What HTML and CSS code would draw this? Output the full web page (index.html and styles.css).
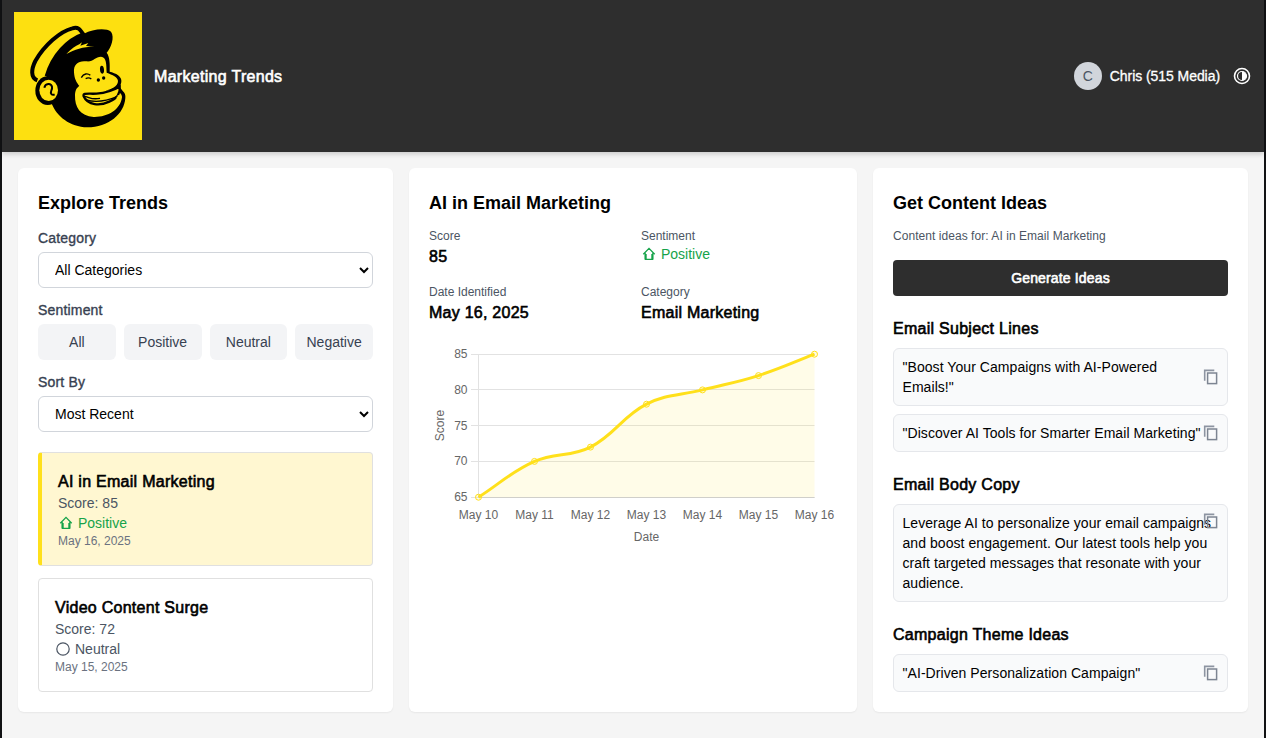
FILE: index.html
```html
<!DOCTYPE html>
<html lang="en">
<head>
<meta charset="utf-8">
<title>Marketing Trends</title>
<link rel="stylesheet" href="styles.css">
</head>
<body>
<svg class="defs" aria-hidden="true">
  <symbol id="copy" viewBox="0 0 16 16"><path d="M1.7 11.8V1.4h9.6" fill="none" stroke="#8d94a1" stroke-width="1.6"/><rect x="4.6" y="4" width="9" height="10.6" fill="none" stroke="#7d8592" stroke-width="1.5"/></symbol>
  <symbol id="home" viewBox="0 0 16 16"><path d="M2.3 8.3L8 2.4l5.7 5.9M4.3 7.2v6.1h7.4V7.2" fill="none" stroke="currentColor" stroke-width="1.3"/><path d="M3.7 8h2v5h-2zM10.3 8h2v5h-2z" fill="currentColor"/></symbol>
</svg>
<div class="app">
  <header class="header">
    <svg class="logo" viewBox="42 36 384 384">
      <rect x="42" y="36" width="384" height="384" fill="#fde010"/>
      <path d="M138 238C142 205 165 160 190 138C212 118 236 104 252 101C278 87 318 83 333 95C345 112 333 143 320 158C329 170 330 190 329 215C347 219 367 229 364 246L360 262C366 274 378 277 376 294C373 342 325 382 262 382C210 380 170 350 154 308Z"/>
      <path d="M112 241C91 233 94 207 106 183C132 137 180 94 217 85C235 80 239 87 250 103C204 119 158 165 140 229" fill="#fde010" stroke="#000" stroke-width="12"/>
      <path d="M199 162C214 147 226 138 238 133L246 127L241 137L265 129L258 138L283 140C248 140 224 148 199 162Z" fill="#fde010"/>
      <path d="M222 217C220 190 238 181 260 184C280 186 286 170 303 170C320 171 319 193 320 218C337 224 354 232 354 243C354 260 332 268 317 272C339 271 349 267 354 269C353 276 367 280 366 292C361 330 322 352 281 351C240 348 224 322 225 286C226 270 229 265 238 258C230 248 223 237 222 217Z" fill="#fde010"/>
      <ellipse cx="143" cy="272" rx="37" ry="43"/>
      <ellipse cx="146" cy="271" rx="28" ry="32" fill="#fde010"/>
      <path d="M133 263C136 249 153 248 156 260C158 270 149 275 154 282C157 286 161 284 164 284" fill="none" stroke="#000" stroke-width="6"/>
      <path d="M251 289C248 278 262 282 290 281C319 278 343 269 359 260C361 275 355 295 328 305C301 318 263 317 251 289Z" fill="#fde010" stroke="#000" stroke-width="7"/>
      <path d="M255 289C271 293 275 300 300 295M258 300C290 309 323 302 351 290" fill="none" stroke="#000" stroke-width="4"/>
      <path d="M355 286Q359 295 350 294" fill="none" stroke="#fde010" stroke-width="7"/>
      <path d="M244 233C251 220 263 219 271 226M257 236Q266 231 274 237" fill="none" stroke="#000" stroke-width="4"/>
      <ellipse cx="306" cy="209" rx="6" ry="12" transform="rotate(-5 306 209)"/><circle cx="295" cy="240" r="5"/><circle cx="311" cy="234" r="5"/>
    </svg>
    <h1 class="brand">Marketing Trends</h1>
    <div class="user"><span class="avatar">C</span><span class="name">Chris (515 Media)</span>
      <svg class="contrast" viewBox="0 0 18 18"><circle cx="9" cy="9" r="7.5" fill="none" stroke="#fff" stroke-width="1.6"/><circle cx="9" cy="9" r="4.5" fill="none" stroke="#fff" stroke-width="1.2"/><path d="M9 4.5a4.5 4.5 0 0 1 0 9z" fill="#fff"/></svg>
    </div>
  </header>
  <main class="columns">
    <section class="panel">
      <h2 class="title">Explore Trends</h2>
      <label class="label">Category</label>
      <select class="select"><option>All Categories</option></select>
      <label class="label">Sentiment</label>
      <div class="filters"><button>All</button><button>Positive</button><button>Neutral</button><button>Negative</button></div>
      <label class="label">Sort By</label>
      <select class="select"><option>Most Recent</option></select>
      <div class="trends">
        <article class="trend active"><h3>AI in Email Marketing</h3><p>Score: 85</p><p class="mood positive"><svg class="icon"><use href="#home"/></svg>Positive</p><time>May 16, 2025</time></article>
        <article class="trend"><h3>Video Content Surge</h3><p>Score: 72</p><p class="mood"><svg class="icon" viewBox="0 0 16 16"><circle cx="8" cy="8" r="6.2" fill="none" stroke="currentColor" stroke-width="1.2"/></svg>Neutral</p><time>May 15, 2025</time></article>
      </div>
    </section>
    <section class="panel">
      <h2 class="title">AI in Email Marketing</h2>
      <dl class="facts">
        <div><dt>Score</dt><dd>85</dd></div>
        <div><dt>Sentiment</dt><dd class="mood positive"><svg class="icon"><use href="#home"/></svg>Positive</dd></div>
        <div><dt>Date Identified</dt><dd>May 16, 2025</dd></div>
        <div><dt>Category</dt><dd>Email Marketing</dd></div>
      </dl>
      <svg class="chart" viewBox="429 340 408 210">
        <path class="grid" d="M471 354.5H814.5M471 389.5H814.5M471 425.5H814.5M471 461.5H814.5M471 497.5H814.5M478.5 354V497"/>
        <path class="grid base" d="M478.5 497.5H814.5"/>
        <path class="area" d="M478.5 497.2C500.9 482.9 510.5 472.1 534.5 461.4C555.3 452.1 570.3 457.4 590.5 447.1C615.1 434.5 621.9 416.8 646.5 404.2C666.7 393.9 680.1 395.6 702.5 389.9C724.9 384.2 736.5 382.6 758.5 375.6C781.3 368.3 792.1 362.8 814.5 354.2V497.2Z"/>
        <path class="line" d="M478.5 497.2C500.9 482.9 510.5 472.1 534.5 461.4C555.3 452.1 570.3 457.4 590.5 447.1C615.1 434.5 621.9 416.8 646.5 404.2C666.7 393.9 680.1 395.6 702.5 389.9C724.9 384.2 736.5 382.6 758.5 375.6C781.3 368.3 792.1 362.8 814.5 354.2"/>
        <g class="points"><circle cx="478.5" cy="497.2" r="3"/><circle cx="534.5" cy="461.4" r="3"/><circle cx="590.5" cy="447.1" r="3"/><circle cx="646.5" cy="404.2" r="3"/><circle cx="702.5" cy="389.9" r="3"/><circle cx="758.5" cy="375.6" r="3"/><circle cx="814.5" cy="354.2" r="3"/></g>
        <g class="ticks-y"><text x="467.5" y="358">85</text><text x="467.5" y="394">80</text><text x="467.5" y="430">75</text><text x="467.5" y="465">70</text><text x="467.5" y="501">65</text></g>
        <g class="ticks-x"><text x="478.5" y="519">May 10</text><text x="534.5" y="519">May 11</text><text x="590.5" y="519">May 12</text><text x="646.5" y="519">May 13</text><text x="702.5" y="519">May 14</text><text x="758.5" y="519">May 15</text><text x="814.5" y="519">May 16</text><text x="646.5" y="541">Date</text><text transform="translate(444 425.5) rotate(-90)">Score</text></g>
      </svg>
    </section>
    <section class="panel">
      <h2 class="title">Get Content Ideas</h2>
      <p class="hint">Content ideas for: AI in Email Marketing</p>
      <button class="generate">Generate Ideas</button>
      <h3 class="group">Email Subject Lines</h3>
      <div class="idea"><p>"Boost Your Campaigns with AI-Powered Emails!"</p><svg class="copy"><use href="#copy"/></svg></div>
      <div class="idea"><p>"Discover AI Tools for Smarter Email Marketing"</p><svg class="copy"><use href="#copy"/></svg></div>
      <h3 class="group">Email Body Copy</h3>
      <div class="idea body-copy"><p>Leverage AI to personalize your email campaigns and boost engagement. Our latest tools help you craft targeted messages that resonate with your audience.</p><svg class="copy"><use href="#copy"/></svg></div>
      <h3 class="group">Campaign Theme Ideas</h3>
      <div class="idea"><p>"AI-Driven Personalization Campaign"</p><svg class="copy"><use href="#copy"/></svg></div>
    </section>
  </main>
</div>
</body>
</html>
```
FILE: styles.css
```css
* { box-sizing: border-box; margin: 0; padding: 0; }
body { height: 738px; overflow: hidden; padding: 0 2px; background: #111214; font: 14px/20px "Liberation Sans", Arial, sans-serif; color: #000; }
button, select { font: inherit; }
.defs { position: absolute; width: 0; height: 0; }
.app { height: 738px; background: #f5f5f5; }
.header { display: flex; align-items: center; gap: 12px; height: 152px; padding: 12px; background: #2e2e2e; color: #fff; box-shadow: 0 2px 5px rgba(0,0,0,.18); }
.logo { width: 128px; height: 128px; }
.brand { padding-top: 2px; font-size: 16px; line-height: 24px; font-weight: 400; -webkit-text-stroke: .6px; letter-spacing: .3px; }
.user { display: flex; align-items: center; margin-left: auto; }
.avatar { width: 28px; height: 28px; margin-right: 8px; border-radius: 50%; background: #d1d5db; color: #4b5563; line-height: 28px; text-align: center; }
.name { margin-right: 13px; letter-spacing: -.06px; -webkit-text-stroke: .3px; }
.contrast { width: 18px; height: 18px; margin-right: 1px; }
.columns { display: grid; grid-template-columns: 375px 448px 375px; gap: 16px; padding: 16px; height: 576px; }
.panel { padding: 20px; border-radius: 6px; background: #fff; box-shadow: 0 1px 2px rgba(0,0,0,.06); }
.title { margin-bottom: 11px; padding-top: 1px; font-size: 18px; line-height: 28px; font-weight: 700; }
.label { display: block; margin-bottom: 4px; color: #374151; letter-spacing: .18px; -webkit-text-stroke: .35px; }
.select { display: block; width: 100%; height: 36px; margin-bottom: 12px; padding: 0 0 0 12px; border: 1px solid #d1d5db; border-radius: 6px; background: #fff; color: #000; }
.filters { display: grid; grid-template-columns: repeat(4, 1fr); gap: 8px; margin-bottom: 12px; }
.filters button { height: 36px; border: 0; border-radius: 6px; background: #f3f4f6; color: #374151; }
.trends { display: grid; gap: 12px; margin-top: 20px; }
.trend { height: 114px; padding: 16px; border: 1px solid #e0e0e0; border-radius: 4px; color: #4b5563; }
.trend.active { border-left: 4px solid #ffe01b; background: #fff7d1; }
.trend h3 { padding-top: 1px; color: #000; font-size: 16px; line-height: 23px; font-weight: 400; letter-spacing: .27px; -webkit-text-stroke: .6px; }
.trend time { display: block; color: #6b7280; font-size: 12px; line-height: 16px; }
.mood { display: flex; align-items: center; gap: 4px; }
.trend .positive, .facts .positive { color: #16a34a; }
.icon { width: 16px; height: 16px; }
.facts { display: grid; grid-template-columns: 1fr 1fr; gap: 16px; }
.facts dt { color: #4b5563; font-size: 12px; line-height: 16px; }
.facts dd { padding-top: 2px; font-size: 16px; line-height: 22px; letter-spacing: .25px; -webkit-text-stroke: .6px; }
.facts dd.mood { padding-top: 0; font-size: 14px; line-height: 20px; letter-spacing: 0; -webkit-text-stroke: 0; }
.chart { display: block; width: 408px; height: 210px; margin-top: 16px; overflow: visible; font-size: 12px; }
.grid { fill: none; stroke: #e2e2e2; }
.base { stroke: #cfcfcf; }
.area { fill: #ffe01b; fill-opacity: .1; }
.line { fill: none; stroke: #ffe01b; stroke-width: 3; }
.points { fill: #ffe01b; fill-opacity: .1; stroke: #ffe01b; }
.chart text { fill: #666; }
.ticks-y { text-anchor: end; }
.ticks-x { text-anchor: middle; }
.hint { color: #4b5563; font-size: 12px; line-height: 16px; letter-spacing: .05px; }
.generate { display: block; width: 100%; height: 36px; margin: 16px 0 20px; border: 0; border-radius: 4px; background: #2e2e2e; color: #fff; letter-spacing: .15px; -webkit-text-stroke: .6px; }
.group { margin: 20px 0 8px; padding-top: 2px; font-size: 16px; line-height: 22px; font-weight: 400; letter-spacing: .27px; -webkit-text-stroke: .6px; }
.idea { display: flex; align-items: center; position: relative; padding: 8px; border: 1px solid #e5e7eb; border-radius: 6px; background: #f9fafb; }
.idea + .idea { margin-top: 8px; }
.idea p { flex: 1; padding-left: .5px; letter-spacing: .06px; white-space: normal; }
.copy { flex: none; width: 16px; height: 16px; }
.body-copy .copy { position: absolute; top: 8px; right: 8px; }
```
